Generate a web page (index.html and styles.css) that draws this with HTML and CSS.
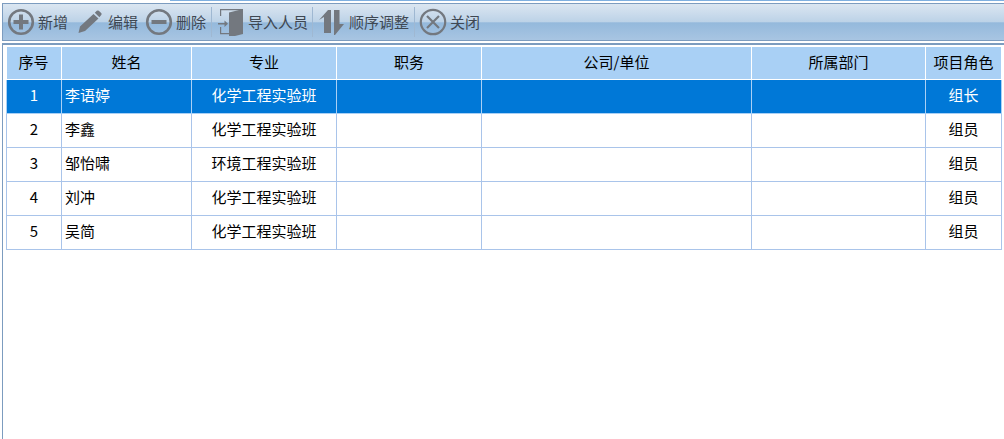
FILE: index.html
```html
<!DOCTYPE html>
<html lang="zh">
<head>
<meta charset="utf-8">
<title>项目人员</title>
<link rel="stylesheet" href="styles.css">
</head>
<body>
<div class="page">
  <div class="tab-edge"></div>
  <div class="toolbar">
    <button class="tool t-add"><svg class="ic" width="28" height="28" viewBox="0 0 28 28"><circle cx="14" cy="14" r="11.800" fill="none" stroke="#73787f" stroke-width="2.600"/><path d="M14 6.500v15M6.500 14h15" stroke="#73787f" stroke-width="4"/></svg><span>新增</span></button>
    <button class="tool t-edit"><svg class="ic" width="28" height="28" viewBox="0 0 28 28"><path d="M3.500 25l1.500-6.500L18.500 6l5 4.500L10 23z M19.800 4.800l2-2q1-.8 2 0l2.400 2.200q1 1 0 2l-1.800 2.200z" fill="#73787f"/></svg><span>编辑</span></button>
    <button class="tool t-del"><svg class="ic" width="28" height="28" viewBox="0 0 28 28"><circle cx="14" cy="14" r="11.800" fill="none" stroke="#73787f" stroke-width="2.600"/><path d="M6.500 14h15" stroke="#73787f" stroke-width="4"/></svg><span>删除</span></button>
    <i class="sep s1"></i>
    <button class="tool t-imp"><svg class="ic" width="28" height="28" viewBox="0 0 28 28"><path d="M4 8V1h23v1.200H5.200V8zM4 19h1.200v6h7.800v1.200H4z" fill="#73787f"/><path d="M13 4.500L27 1v25l-14 3.500z" fill="#73787f"/><path d="M2 15h6.500v-2.500l3.500 3.300-3.500 3.300V16.500H2z" fill="#73787f"/></svg><span>导入人员</span></button>
    <i class="sep s2"></i>
    <button class="tool t-ord"><svg class="ic" width="28" height="28" viewBox="0 0 28 28"><path d="M1 12L10 2h3v23H6V9z" fill="#73787f"/><path d="M16 2h5.500v14H26L17 27h-1z" fill="#73787f"/></svg><span>顺序调整</span></button>
    <i class="sep s3"></i>
    <button class="tool t-close"><svg class="ic" width="28" height="28" viewBox="0 0 28 28"><circle cx="14" cy="14" r="12.200" fill="none" stroke="#73787f" stroke-width="2.200"/><path d="M8 8l12 12M20 8L8 20" stroke="#73787f" stroke-width="2.200"/></svg><span>关闭</span></button>
  </div>
  <div class="panel">
    <table class="grid">
      <colgroup><col class="c1"><col class="c2"><col class="c3"><col class="c4"><col class="c5"><col class="c6"><col class="c7"></colgroup>
      <thead><tr><th class="first">序号</th><th>姓名</th><th>专业</th><th>职务</th><th>公司/单位</th><th>所属部门</th><th>项目角色</th></tr></thead>
      <tbody>
        <tr class="sel"><td>1</td><td class="name">李语婷</td><td>化学工程实验班</td><td></td><td></td><td></td><td>组长</td></tr>
        <tr><td>2</td><td class="name">李鑫</td><td>化学工程实验班</td><td></td><td></td><td></td><td>组员</td></tr>
        <tr><td>3</td><td class="name">邹怡啸</td><td>环境工程实验班</td><td></td><td></td><td></td><td>组员</td></tr>
        <tr><td>4</td><td class="name">刘冲</td><td>化学工程实验班</td><td></td><td></td><td></td><td>组员</td></tr>
        <tr><td>5</td><td class="name">吴简</td><td>化学工程实验班</td><td></td><td></td><td></td><td>组员</td></tr>
      </tbody>
    </table>
  </div>
</div>
</body>
</html>
```
FILE: styles.css
```css
html, body { margin: 0; padding: 0; height: 100%; overflow: hidden; background: #fff; }
body { font: 15px "Noto Sans CJK SC", "Liberation Sans", sans-serif; color: #000; }
.page { height: 439px; box-sizing: border-box; padding: 0 0 0 2px; display: flex; flex-direction: column; }
.tab-edge { height: 1px; margin: 0 0 2px 168px; background: #7fb0e0; }
.toolbar { height: 38px; flex: none; box-sizing: border-box; display: flex; align-items: center; padding: 0 0 0 4px; border: 1px solid #7c9cbf; border-width: 1px 0 1px 1px;
  background: linear-gradient(#dbe6f1 0, #bcd2e7 50%, #94b9dc 52%, #a8c5e2 100%); }
.tool { display: flex; align-items: center; gap: 3px; height: 36px; padding: 0; margin: 0; background: none; border: 0; font: inherit; color: #3f4853; white-space: nowrap; }
.tool span { padding-bottom: 2px; }
.t-edit { margin-left: 7px; gap: 5px; }
.t-del { margin-left: 7px; }
.t-imp { margin-left: 4px; gap: 4px; }
.t-ord { margin-left: 5px; }
.t-close { margin-left: 4px; }
.sep { width: 1px; height: 30px; background: #9fb8d2; }
.s1 { margin-left: 5px; }
.s2 { margin-left: 4px; }
.s3 { margin-left: 5px; }
.panel { flex: 1; margin-top: 2px; border-left: 1px solid #7c9cbf; border-top: 2px solid #7c9cbf; padding: 2px 2px 0 3px; min-height: 0; }
.grid { width: 996px; table-layout: fixed; border-collapse: collapse; }
.c1 { width: 55px; } .c2 { width: 130px; } .c3 { width: 145px; } .c4 { width: 145px; } .c5 { width: 270px; } .c6 { width: 174px; } .c7 { width: 76px; }
th { height: 32px; box-sizing: border-box; padding: 0 0 3px; background: #a9d0f5; font-weight: 400; border: 1px solid #fff; border-top: 0; text-align: center; }
th.first { padding-right: 1px; }
td { height: 34px; box-sizing: border-box; padding: 0 0 4px; border: 1px solid #a9c4ea; text-align: center; }
td.name { text-align: left; padding-left: 3px; }
tr.sel td { background: #0078d7; color: #fff; border-color: #a9d0f5; }
```
